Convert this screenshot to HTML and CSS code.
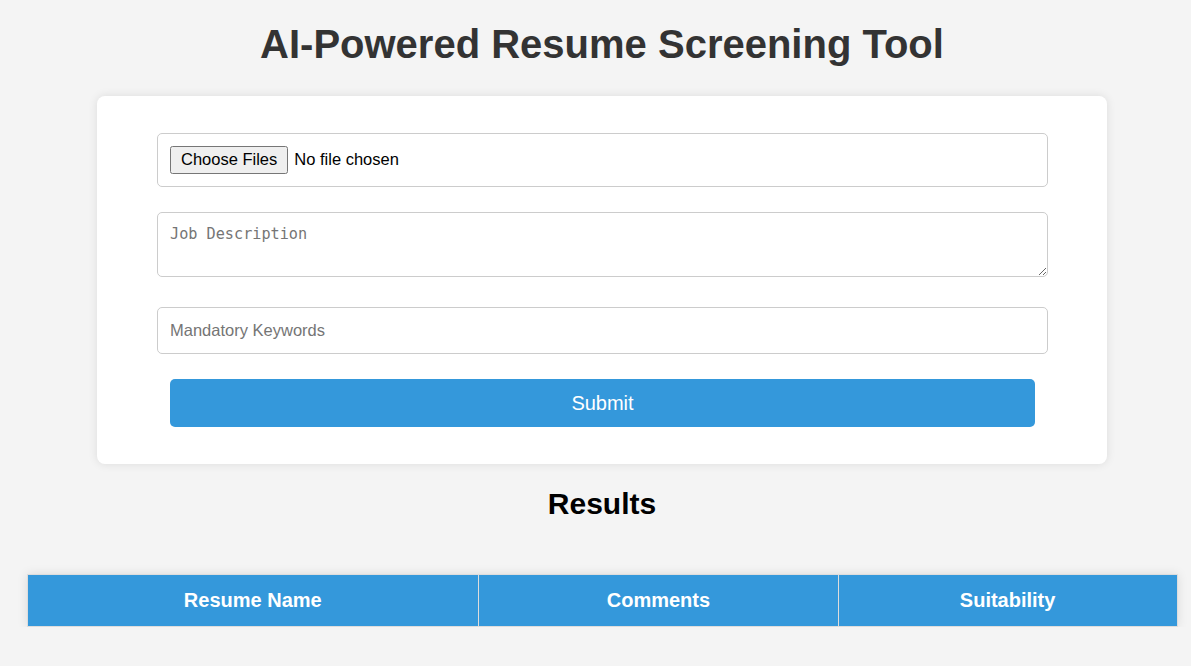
FILE: index.html
```html
<!DOCTYPE html>
<html lang="en">
<head>
<meta charset="utf-8">
<title>AI-Powered Resume Screening Tool</title>
<link rel="stylesheet" href="styles.css">
</head>
<body>
<div class="page">
  <h1 class="title">AI-Powered Resume Screening Tool</h1>
  <div class="card">
    <form class="form">
      <input class="field file-field" type="file" multiple>
      <textarea class="field textarea-field" placeholder="Job Description"></textarea>
      <input class="field text-field" type="text" placeholder="Mandatory Keywords">
      <button class="submit" type="button">Submit</button>
    </form>
  </div>
  <h2 class="results-title">Results</h2>
  <table class="results">
    <thead>
      <tr>
        <th class="col-name">Resume Name</th>
        <th class="col-comments">Comments</th>
        <th class="col-suit">Suitability</th>
      </tr>
    </thead>
    <tbody></tbody>
  </table>
</div>
</body>
</html>
```

FILE: styles.css
```css
* { box-sizing: border-box; }

html, body {
  margin: 0;
  padding: 0;
  background: #f4f4f4;
  font-family: "Liberation Sans", Arial, sans-serif;
}

.page {
  width: 1150px;
  margin-left: 27px;
  padding-top: 21px;
}

.title {
  margin: 0 0 29px;
  text-align: center;
  font-size: 40px;
  line-height: 46px;
  font-weight: bold;
  color: #333;
}

.card {
  width: 1010px;
  margin: 0 auto;
  background: #fff;
  border-radius: 8px;
  box-shadow: 0 0 10px rgba(0, 0, 0, 0.1);
  padding: 37px 59px 37px 60px;
}

.form {
  display: flex;
  flex-direction: column;
}

.field {
  display: block;
  width: 100%;
  border: 1px solid #ccc;
  border-radius: 5px;
  background: #fff;
  padding: 12px;
  font-family: "Liberation Sans", Arial, sans-serif;
  font-size: 16px;
  color: #000;
  margin: 0 0 25px;
}

.file-field {
  height: 54px;
  font-size: 16.5px;
}

.file-field::file-selector-button {
  font-family: "Liberation Sans", Arial, sans-serif;
  font-size: 16.5px;
  padding: 2px 9px 3px;
  margin-right: 6px;
}

.textarea-field {
  height: 65px;
  margin-bottom: 30px;
  font-family: "DejaVu Sans Mono", monospace;
  font-size: 15.2px;
  line-height: 18px;
  padding: 12px;
  resize: vertical;
}

.textarea-field::placeholder {
  color: #757575;
}

.text-field {
  height: 47px;
}

.text-field::placeholder {
  color: #757575;
  font-size: 16.5px;
}

.submit {
  margin: 0 13px;
  height: 48px;
  border: none;
  border-radius: 5px;
  background: #3498db;
  color: #fff;
  font-family: "Liberation Sans", Arial, sans-serif;
  font-size: 20px;
  cursor: pointer;
}

.results-title {
  margin: 23px 0 53px;
  text-align: center;
  font-size: 30px;
  line-height: 34px;
  font-weight: bold;
  color: #000;
}

.results {
  width: 1151px;
  margin-left: -0.5px;
  border-collapse: collapse;
  box-shadow: 0 0 10px rgba(0, 0, 0, 0.1);
}

.results th {
  background: #3498db;
  color: #fff;
  font-size: 20px;
  line-height: 23px;
  font-weight: bold;
  text-align: center;
  padding: 14px 15px;
  border: 1px solid #ddd;
}

.col-name { width: 452px; }
.col-comments { width: 360px; }
.col-suit { width: 339px; }
```
